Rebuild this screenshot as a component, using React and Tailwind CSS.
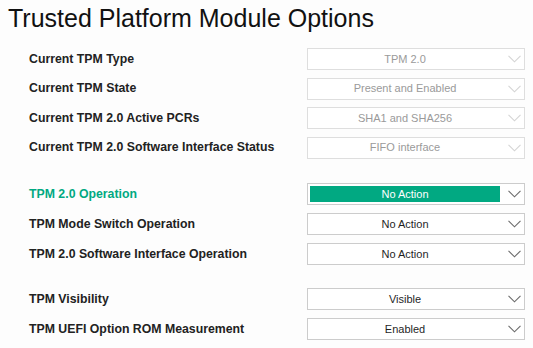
import React from "react";

const groups = [
  {
    gap: "gap-[7.5px]",
    mt: "",
    rows: [
      { label: "Current TPM Type", value: "TPM 2.0", disabled: true },
      { label: "Current TPM State", value: "Present and Enabled", disabled: true },
      { label: "Current TPM 2.0 Active PCRs", value: "SHA1 and SHA256", disabled: true },
      { label: "Current TPM 2.0 Software Interface Status", value: "FIFO interface", disabled: true },
    ],
  },
  {
    gap: "gap-[8px]",
    mt: "mt-[24.5px]",
    rows: [
      { label: "TPM 2.0 Operation", value: "No Action", active: true },
      { label: "TPM Mode Switch Operation", value: "No Action" },
      { label: "TPM 2.0 Software Interface Operation", value: "No Action" },
    ],
  },
  {
    gap: "gap-[8px]",
    mt: "mt-[23px]",
    rows: [
      { label: "TPM Visibility", value: "Visible" },
      { label: "TPM UEFI Option ROM Measurement", value: "Enabled" },
    ],
  },
];

function Chevron({ disabled }) {
  return (
    <svg width="13" height="8" viewBox="0 0 13 8" className="shrink-0">
      <path
        d="M0.5 0.8 L6.5 6.8 L12.5 0.8"
        fill="none"
        stroke={disabled ? "#d4d4d4" : "#6b6b6b"}
        strokeWidth="1.1"
      />
    </svg>
  );
}

function Select({ value, disabled, active }) {
  return (
    <div
      className={`w-[218px] h-[22px] border flex items-center py-[2px] pl-[2px] ${
        disabled ? "border-[#dedede]" : "border-[#cccccc]"
      } bg-white`}
    >
      <div
        className={`flex-1 h-full flex items-center justify-center text-[11px] ${
          active ? "bg-[#01a982] text-white" : disabled ? "text-[#9a9a9a]" : "text-[#1f1f1f]"
        }`}
      >
        {value}
      </div>
      <div className="w-[24px] pr-[3px] flex justify-end">
        <Chevron disabled={disabled} />
      </div>
    </div>
  );
}

export default function App() {
  return (
    <div
      className="w-[533px] h-[348px] bg-[#fdfdfd] overflow-hidden"
      style={{ fontFamily: '"Liberation Sans", Arial, sans-serif' }}
    >
      <h1 className="pl-[8px] pt-[3px] text-[25px] leading-[30px] text-[#111]">
        Trusted Platform Module Options
      </h1>
      <div className="mt-[15px] flex flex-col">
        {groups.map((g, gi) => (
          <div key={gi} className={`flex flex-col ${g.gap} ${g.mt}`}>
            {g.rows.map((r) => (
              <div key={r.label} className="flex items-center h-[22px]">
                <div
                  className={`w-[307px] pl-[29px] text-[12.3px] font-bold ${
                    r.active ? "text-[#01a982]" : "text-[#222]"
                  }`}
                >
                  {r.label}
                </div>
                <Select value={r.value} disabled={r.disabled} active={r.active} />
              </div>
            ))}
          </div>
        ))}
      </div>
    </div>
  );
}
